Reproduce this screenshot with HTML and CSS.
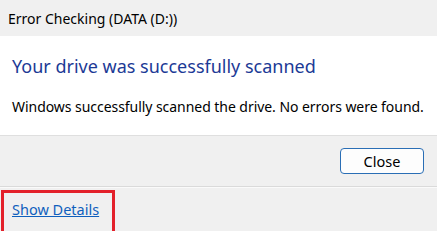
FILE: index.html
```html
<!DOCTYPE html>
<html lang="en">
<head>
    <meta charset="UTF-8" />
    <title>Error Checking (DATA (D:))</title>
    <link rel="stylesheet" href="styles.css">
</head>
<body>

<div class="dialog">
    <div class="titlebar">Error Checking (DATA (D:))</div>

    <div class="content">
        <h1 class="instruction">Your drive was successfully scanned</h1>
        <p class="message">Windows successfully scanned the drive. No errors were found.</p>
    </div>

    <div class="button-row">
        <button class="close-btn">Close</button>
    </div>

    <div class="footer">
        <a href="#" class="details-link">Show Details</a>
        <div class="highlight"></div>
    </div>
</div>

</body>
</html>
```

FILE: styles.css
```css
body {
    margin: 0;
    padding: 0;
    background: #f0f0f0;
    font-family: "Noto Sans", "Open Sans", sans-serif;
    color: #000;
}

.dialog {
    width: 437px;
    height: 231px;
    display: flex;
    flex-direction: column;
    overflow: hidden;
}

.titlebar {
    height: 36px;
    display: flex;
    align-items: center;
    padding-left: 8px;
    font-size: 14px;
    background: #f0f0f0;
}

.content {
    height: 99px;
    box-sizing: border-box;
    background: #fff;
    padding: 15px 12px 0;
}

.instruction {
    margin: 0;
    font-size: 18px;
    font-weight: normal;
    color: #1c3a96;
    line-height: 30px;
}

.message {
    margin: 16px 0 0;
    font-size: 14px;
    letter-spacing: -0.05px;
    line-height: 20px;
    white-space: nowrap;
}

.button-row {
    height: 51px;
    box-sizing: border-box;
    border-top: 1px solid #dfdfdf;
    display: flex;
    justify-content: flex-end;
    align-items: center;
    padding-right: 13px;
}

.close-btn {
    width: 84px;
    height: 26px;
    font-family: inherit;
    font-size: 14.5px;
    background: #fdfdfd;
    border: 1px solid #2a6eb5;
    border-radius: 4px;
    padding: 0;
    color: #000;
}

.footer {
    flex: 1;
    position: relative;
    border-top: 1px solid #dadada;
    box-shadow: inset 0 1px 0 #fafafa;
    display: flex;
    align-items: center;
    padding-left: 12px;
}

.details-link {
    font-size: 14.5px;
    color: #0f5fbd;
    text-decoration: underline;
}

.highlight {
    position: absolute;
    left: 1px;
    top: 3px;
    width: 108px;
    height: 40px;
    border: 3px solid #e3202a;
}
```
